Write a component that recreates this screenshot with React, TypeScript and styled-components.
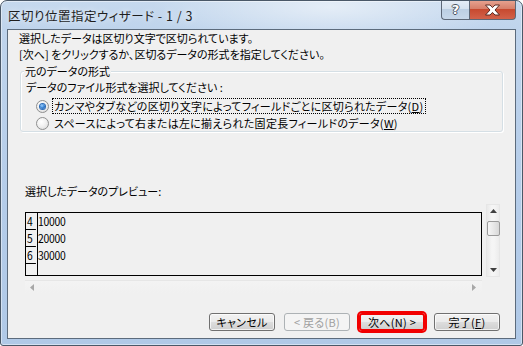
import React from 'react';
import styled, { createGlobalStyle, css } from 'styled-components';

const FONT = `"Noto Sans CJK JP", "Noto Sans CJK SC", "Noto Sans", sans-serif`;

const GlobalStyle = createGlobalStyle`
  html, body { margin: 0; padding: 0; background: #ffffff; }
  body { font-family: ${FONT}; }
  #root { width: 523px; height: 346px; }
`;

const Window = styled.div`
  box-sizing: border-box;
  width: 523px;
  height: 346px;
  display: flex;
  flex-direction: column;
  padding: 0 6px 6px 6px;
  border: 1px solid #4a5868;
  border-radius: 7px 7px 3px 3px;
  background:
    radial-gradient(ellipse 180px 40px at 330px 6px, rgba(255, 255, 255, 0.55), rgba(255, 255, 255, 0) 100%),
    linear-gradient(180deg, #c6d9ee 0px, #bfd4ec 28px, #b4cce9 60%, #b0c9e7 100%);
  box-shadow: inset 0 0 0 1px rgba(255, 255, 255, 0.45);
  overflow: hidden;
  font-family: ${FONT};
  font-feature-settings: "palt";
`;

const TitleBar = styled.div`
  height: 28px;
  flex: none;
  display: flex;
  align-items: flex-start;
  justify-content: space-between;
`;

const Title = styled.div`
  margin: 6px 0 0 1px;
  font-size: 12.5px;
  line-height: 17px;
  color: #1e1e1e;
  letter-spacing: 0.5px;
  text-shadow: 0 0 6px rgba(255, 255, 255, 0.9);
`;

const CaptionButtons = styled.div`
  display: flex;
  margin-top: -1px;
`;

const CaptionButton = styled.div<{ $kind: 'help' | 'close' }>`
  box-sizing: border-box;
  height: 20px;
  display: flex;
  align-items: center;
  justify-content: center;
  border: 1px solid #5d6877;
  border-top: none;
  ${(p) =>
    p.$kind === 'help'
      ? css`
          width: 28px;
          border-right: none;
          border-radius: 0 0 0 4px;
          background: linear-gradient(180deg, #e6eef7 0%, #d6e2ef 45%, #bccfe3 50%, #c7d8ea 100%);
        `
      : css`
          width: 47px;
          border-radius: 0 0 4px 0;
          background: linear-gradient(180deg, #e8a593 0%, #d7806b 45%, #c74a30 50%, #d2624a 100%);
        `}
`;

const HelpGlyph = styled.span`
  font-family: "DejaVu Sans", sans-serif;
  font-weight: bold;
  font-size: 13px;
  line-height: 13px;
  color: #ffffff;
  text-shadow:
    1px 0 0 #4b5563, -1px 0 0 #4b5563, 0 1px 0 #4b5563, 0 -1px 0 #4b5563;
`;

const Client = styled.div`
  flex: 1;
  box-sizing: border-box;
  border: 1px solid #5c6b7c;
  background: #f0f0f0;
  display: flex;
  flex-direction: column;
  font-size: 11px;
  color: #000;
`;

const Intro = styled.div`
  margin: 0 0 0 11px;
  line-height: 16px;
`;

const GroupBox = styled.div`
  position: relative;
  box-sizing: border-box;
  height: 61px;
  margin: 9px 12px 0 12px;
  border: 1px solid #d5dfe5;
  box-shadow: inset 1px 1px 0 #fff, 1px 1px 0 #fff;
  border-radius: 3px;
  padding: 7px 0 0 5px;
`;

const GroupLabel = styled.div`
  position: absolute;
  top: -9px;
  left: 3px;
  padding: 0 1px;
  background: #f0f0f0;
  line-height: 16px;
`;

const Line = styled.div`
  line-height: 16px;
`;

const RadioList = styled.div`
  display: flex;
  flex-direction: column;
  gap: 1px;
  margin: 3px 0 0 10px;
`;

const RadioRow = styled.div`
  display: flex;
  align-items: center;
  height: 16px;
  gap: 3px;
`;

const RadioCircle = styled.span<{ $checked?: boolean }>`
  box-sizing: border-box;
  width: 13px;
  height: 13px;
  border-radius: 50%;
  border: 1px solid #8e8f8f;
  background: radial-gradient(circle at 40% 35%, #ffffff 0%, #f1f1f1 45%, #d6d6d6 100%);
  display: flex;
  align-items: center;
  justify-content: center;
  flex: none;
  &::after {
    content: '';
    display: ${(p) => (p.$checked ? 'block' : 'none')};
    width: 5px;
    height: 5px;
    border-radius: 50%;
    background: radial-gradient(circle at 40% 35%, #9fd2ff 0%, #3c86d6 45%, #144f9c 100%);
    box-shadow: 0 0 0 1px #2c6cb8;
  }
`;

const RadioText = styled.span<{ $focus?: boolean }>`
  line-height: 14px;
  padding: 0 1px;
  letter-spacing: 0.3px;
  border: 1px dotted ${(p) => (p.$focus ? '#000' : 'transparent')};
`;

const Acc = styled.span`
  text-decoration: underline;
  text-underline-offset: 1px;
`;

const PreviewLabel = styled.div`
  margin: 51px 0 0 17px;
  line-height: 16px;
`;

const PreviewArea = styled.div`
  margin: 5px 0 0 17px;
  display: grid;
  grid-template-columns: 457px 14px;
  grid-template-rows: 73px 16px;
  column-gap: 4px;
`;

const PreviewBox = styled.div`
  box-sizing: border-box;
  align-self: end;
  height: 64px;
  margin-bottom: 1px;
  border: 1px solid #000;
  display: flex;
`;

const NumCol = styled.div`
  width: 11px;
  flex: none;
  border-right: 1px solid #000;
  display: flex;
  flex-direction: column;
`;

const NumCell = styled.div`
  box-sizing: border-box;
  height: 17px;
  border-bottom: 1px solid #000;
  font-size: 11.5px;
  line-height: 16px;
  padding-left: 1px;
  transform: scaleX(0.9);
  transform-origin: left center;
`;

const DataCol = styled.div`
  display: flex;
  flex-direction: column;
`;

const DataCell = styled.div`
  height: 17px;
  font-size: 11.5px;
  line-height: 16px;
  letter-spacing: -0.3px;
  transform: scaleX(0.9);
  transform-origin: left center;
`;

const VScroll = styled.div`
  box-sizing: border-box;
  grid-column: 2;
  grid-row: 1;
  align-self: end;
  height: 73px;
  border: 1px solid #e6e6e6;
  background: linear-gradient(90deg, #e9e9e9, #f5f5f5 40%, #f5f5f5 60%, #ececec);
  display: flex;
  flex-direction: column;
  align-items: center;
`;

const Thumb = styled.div`
  box-sizing: border-box;
  width: 13px;
  height: 15px;
  margin-top: 4px;
  border: 1px solid #9a9a9a;
  border-radius: 2px;
  background: linear-gradient(90deg, #f6f6f6 0%, #e8e8e8 50%, #d8d8d8 100%);
`;

const ArrowBox = styled.div<{ $grow?: boolean }>`
  height: 12px;
  display: flex;
  align-items: center;
  justify-content: center;
  ${(p) => p.$grow && 'margin-top: auto;'}
`;

const HScroll = styled.div`
  box-sizing: border-box;
  grid-column: 1;
  grid-row: 2;
  height: 13px;
  margin-top: 3px;
  border-top: 1px solid #e6e6e6;
  background: linear-gradient(180deg, #f3f3f3, #f0f0f0);
  display: flex;
  align-items: center;
  justify-content: space-between;
  padding: 0 6px 0 5px;
`;

const Footer = styled.div`
  margin: auto 15px 7px 0;
  display: flex;
  justify-content: flex-end;
  gap: 9px;
`;

const Button = styled.div<{ $disabled?: boolean; $highlight?: boolean }>`
  box-sizing: border-box;
  width: 66px;
  height: 18px;
  border: 1px solid #707070;
  border-radius: 3px;
  background: linear-gradient(180deg, #f2f2f2 0%, #ebebeb 48%, #dddddd 52%, #cfcfcf 100%);
  box-shadow: inset 0 0 0 1px rgba(255, 255, 255, 0.7);
  display: flex;
  align-items: center;
  justify-content: center;
  font-size: 11px;
  line-height: 14px;
  letter-spacing: 0.3px;
  color: #000;
  ${(p) =>
    p.$disabled &&
    css`
      border-color: #adb2b5;
      background: #f4f4f4;
      color: #a0a0a0;
      box-shadow: none;
    `}
  ${(p) =>
    p.$highlight &&
    css`
      border: 2px solid #f20000;
      box-shadow: 0 0 0 2px #f20000;
      border-radius: 3px;
    `}
`;

const Tri = ({ dir, color }: { dir: 'up' | 'down' | 'left' | 'right'; color: string }) => {
  const pts: Record<string, string> = {
    up: '0,4 7,4 3.5,0',
    down: '0,0 7,0 3.5,4',
    left: '4,0 4,7 0,3.5',
    right: '0,0 0,7 4,3.5',
  };
  const vertical = dir === 'up' || dir === 'down';
  return (
    <svg width={vertical ? 7 : 4} height={vertical ? 4 : 7} viewBox={vertical ? '0 0 7 4' : '0 0 4 7'}>
      <polygon points={pts[dir]} fill={color} />
    </svg>
  );
};

const CloseIcon = () => (
  <svg width="17" height="12" viewBox="0 0 17 12">
    <path
      d="M1.5 1 H6 L8.5 3.6 L11 1 H15.5 L11 6 L15.5 11 H11 L8.5 8.4 L6 11 H1.5 L6 6 Z"
      fill="#ffffff"
      stroke="#5a2a22"
      strokeWidth="1"
      strokeLinejoin="round"
    />
  </svg>
);

export default function App() {
  const rows = [
    ['4', '10000'],
    ['5', '20000'],
    ['6', '30000'],
  ];
  return (
    <>
      <GlobalStyle />
      <Window>
        <TitleBar>
          <Title>区切り位置指定ウィザード - 1 / 3</Title>
          <CaptionButtons>
            <CaptionButton $kind="help">
              <HelpGlyph>?</HelpGlyph>
            </CaptionButton>
            <CaptionButton $kind="close">
              <CloseIcon />
            </CaptionButton>
          </CaptionButtons>
        </TitleBar>
        <Client>
          <Intro>
            選択したデータは区切り文字で区切られています。
            <br />
            [次へ] をクリックするか、区切るデータの形式を指定してください。
          </Intro>
          <GroupBox>
            <GroupLabel>元のデータの形式</GroupLabel>
            <Line>データのファイル形式を選択してください :</Line>
            <RadioList>
              <RadioRow>
                <RadioCircle $checked />
                <RadioText $focus>
                  カンマやタブなどの区切り文字によってフィールドごとに区切られたデータ(<Acc>D</Acc>)
                </RadioText>
              </RadioRow>
              <RadioRow>
                <RadioCircle />
                <RadioText>
                  スペースによって右または左に揃えられた固定長フィールドのデータ(<Acc>W</Acc>)
                </RadioText>
              </RadioRow>
            </RadioList>
          </GroupBox>
          <PreviewLabel>選択したデータのプレビュー:</PreviewLabel>
          <PreviewArea>
            <PreviewBox>
              <NumCol>
                {rows.map((r) => (
                  <NumCell key={r[0]}>{r[0]}</NumCell>
                ))}
              </NumCol>
              <DataCol>
                {rows.map((r) => (
                  <DataCell key={r[0]}>{r[1]}</DataCell>
                ))}
              </DataCol>
            </PreviewBox>
            <VScroll>
              <ArrowBox>
                <Tri dir="up" color="#404040" />
              </ArrowBox>
              <Thumb />
              <ArrowBox $grow>
                <Tri dir="down" color="#404040" />
              </ArrowBox>
            </VScroll>
            <HScroll>
              <Tri dir="left" color="#a8a8a8" />
              <Tri dir="right" color="#a8a8a8" />
            </HScroll>
          </PreviewArea>
          <Footer>
            <Button>キャンセル</Button>
            <Button $disabled>&lt; 戻る(B)</Button>
            <Button $highlight>次へ(N) &gt;</Button>
            <Button>
              完了(<Acc>F</Acc>)
            </Button>
          </Footer>
        </Client>
      </Window>
    </>
  );
}
